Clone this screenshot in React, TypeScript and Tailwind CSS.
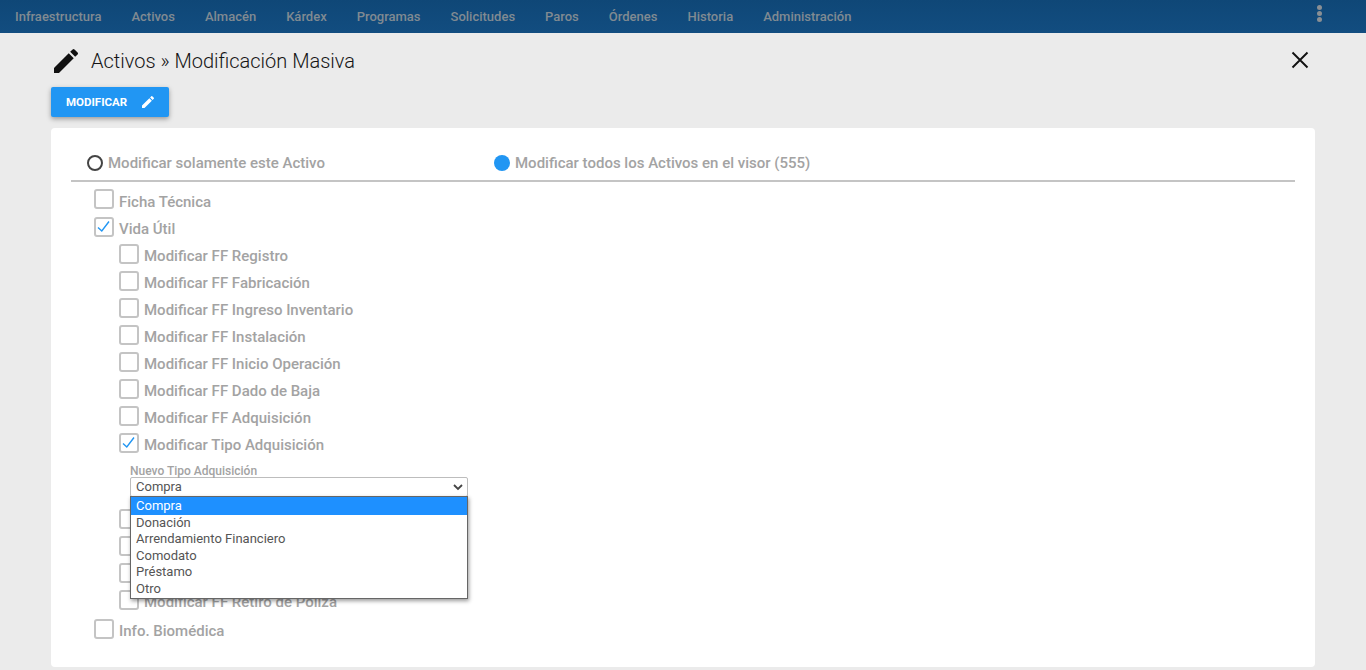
import React from "react";

const nav = ["Infraestructura","Activos","Almacén","Kárdex","Programas","Solicitudes","Paros","Órdenes","Historia","Administración"];

function Check({ checked, label, h = "h-[27px]" }: { checked?: boolean; label: string; h?: string }) {
  return (
    <div className={`flex items-center ${h}`}>
      <span className="w-5 h-5 -mt-[6px] border-2 border-[#c4c4c4] rounded-[3px] bg-white flex items-center justify-center shrink-0">
        {checked && (
          <svg width="16" height="16" viewBox="0 0 16 16" fill="none">
            <path d="M2 8.5 L5.8 12 L13 2.5" stroke="#2196f3" strokeWidth="1.4" />
          </svg>
        )}
      </span>
      <span className="ml-[5px] text-[15px] font-medium text-[#a3a3a3] whitespace-nowrap">{label}</span>
    </div>
  );
}

const Pencil = ({ size, color }: { size: number; color: string }) => (
  <svg width={size} height={size} viewBox="0 0 24 24" fill={color}>
    <path d="M3 17.25V21h3.75L17.81 9.94l-3.75-3.75L3 17.25zM20.71 7.04a1 1 0 0 0 0-1.41l-2.34-2.34a1 1 0 0 0-1.41 0l-1.83 1.83 3.75 3.75 1.83-1.83z" />
  </svg>
);

export default function App() {
  return (
    <div className="h-[670px] w-[1366px] overflow-hidden bg-[#ebebeb] font-['Roboto',sans-serif]">
      <header className="h-[33px] bg-gradient-to-b from-[#0f4777] to-[#124d80] flex items-center pl-[15px] relative">
        <nav className="flex gap-[30px]">
          {nav.map((n) => (
            <span key={n} className="text-[13px] font-medium text-[#808a92] whitespace-nowrap">{n}</span>
          ))}
        </nav>
        <div className="absolute left-[1317px] top-[5px] flex flex-col gap-[1px]">
          <span className="w-[5px] h-[5px] rounded-full bg-[#8a8f94]" />
          <span className="w-[5px] h-[5px] rounded-full bg-[#8a8f94]" />
          <span className="w-[5px] h-[5px] rounded-full bg-[#8a8f94]" />
        </div>
      </header>

      <div className="pl-[51px] pr-[51px]">
        <div className="h-[54px] pt-[2px] flex items-center relative">
          <span className="ml-[-1px]"><Pencil size={32} color="#111" /></span>
          <span className="ml-[9px] text-[20px] text-[#151515] font-light">Activos » Modificación Masiva</span>
          <svg className="absolute right-[4px] top-[16px]" width="22" height="22" viewBox="0 0 22 22" fill="none">
            <path d="M3.5 3.5 L18.5 18.5 M18.5 3.5 L3.5 18.5" stroke="#111" strokeWidth="1.9" />
          </svg>
        </div>

        <button className="w-[118px] h-[30px] bg-[#2196f3] rounded-[2px] shadow-[0_2px_5px_rgba(0,0,0,0.35)] flex items-center pl-[15px]">
          <span className="text-[11.5px] font-bold text-white pt-[1px]">MODIFICAR</span>
          <span className="ml-[13px]"><Pencil size={16} color="#fff" /></span>
        </button>

        <main className="mt-[11px] h-[539px] bg-white rounded-[4px] px-[20px] relative">
          <div className="h-[54px] flex items-center border-b-2 border-[#c4c4c4] pt-[18px]">
            <div className="w-[423px] flex items-center pl-[16px]">
              <span className="w-4 h-4 rounded-full border-2 border-[#444] bg-white" />
              <span className="ml-[5px] text-[15px] font-medium text-[#a3a3a3]">Modificar solamente este Activo</span>
            </div>
            <div className="flex items-center">
              <span className="w-4 h-4 rounded-full bg-[#2196f3]" />
              <span className="ml-[5px] text-[15px] font-medium text-[#a3a3a3]">Modificar todos los Activos en el visor (555)</span>
            </div>
          </div>

          <div className="pl-[23px] pt-[6px]">
            <Check label="Ficha Técnica" h="h-[28px]" />
            <Check label="Vida Útil" checked h="h-[27px]" />
            <div className="pl-[25px]">
              <Check label="Modificar FF Registro" />
              <Check label="Modificar FF Fabricación" />
              <Check label="Modificar FF Ingreso Inventario" />
              <Check label="Modificar FF Instalación" />
              <Check label="Modificar FF Inicio Operación" />
              <Check label="Modificar FF Dado de Baja" />
              <Check label="Modificar FF Adquisición" />
              <Check label="Modificar Tipo Adquisición" checked />
              <div className="pl-[11px] pt-[6px] h-[49px] relative">
                <div className="text-[12px] font-medium leading-[13px] text-[#a3a3a3]">Nuevo Tipo Adquisición</div>
                <div className="-mt-[1px] w-[338px] h-[20px] border border-[#bdbdbd] rounded-[2px] bg-white flex items-center justify-between pl-[5px] pr-[2px]">
                  <span className="text-[13px] text-[#555]">Compra</span>
                  <svg width="14" height="14" viewBox="0 0 14 14" fill="none">
                    <path d="M3 5 L7 9 L11 5" stroke="#444" strokeWidth="1.8" />
                  </svg>
                </div>
                <div className="absolute left-[11px] top-[37px] z-10 w-[338px] h-[103px] bg-white border border-[#666] shadow-[1px_2px_4px_rgba(0,0,0,0.4)] text-[13px] leading-[16.4px] text-[#555]">
                  <div className="bg-[#1e90ff] text-white h-[18px] pl-[5px] leading-[18px]">Compra</div>
                  <div className="pl-[5px]">Donación</div>
                  <div className="pl-[5px]">Arrendamiento Financiero</div>
                  <div className="pl-[5px]">Comodato</div>
                  <div className="pl-[5px]">Préstamo</div>
                  <div className="pl-[5px]">Otro</div>
                </div>
              </div>
              <Check label="Modificar FF Contrato" />
              <Check label="Modificar FF Garantía" />
              <Check label="Modificar FF Inicio Póliza" />
              <Check label="Modificar FF Retiro de Poliza" />
            </div>
            <Check label="Info. Biomédica" h="h-[31px]" />
          </div>
        </main>
      </div>
    </div>
  );
}
